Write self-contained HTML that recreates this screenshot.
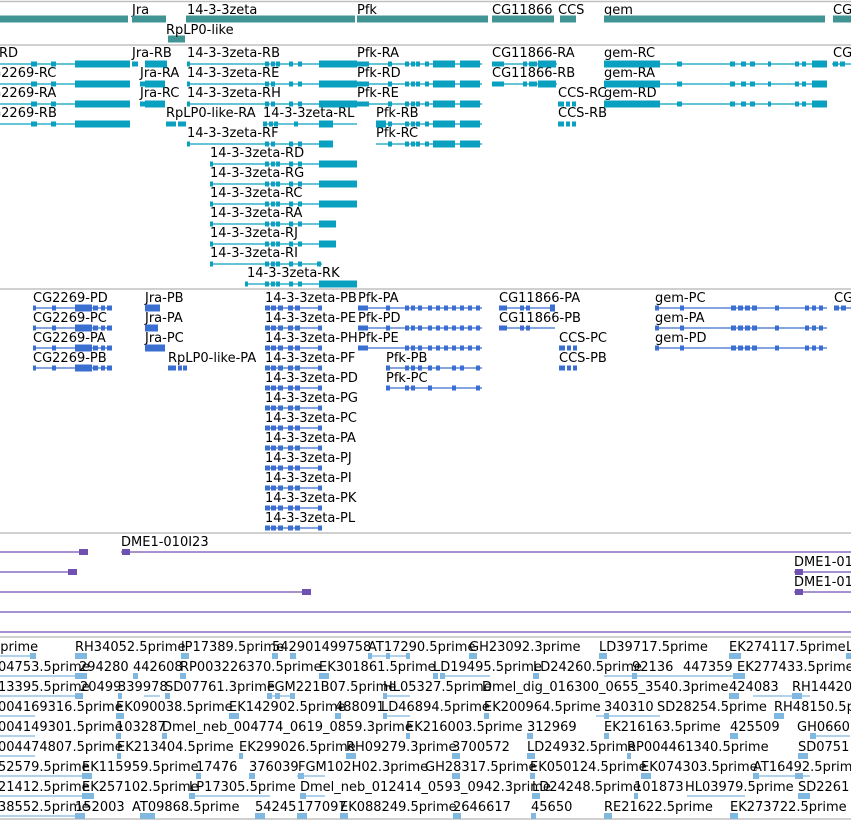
<!DOCTYPE html>
<html><head><meta charset="utf-8"><style>
html,body{margin:0;padding:0;background:#fff;width:851px;height:821px;overflow:hidden}
svg{display:block}
text{font-family:"DejaVu Sans","Liberation Sans",sans-serif;font-size:13px;fill:#000}
.sep{stroke:#c0c0c0;stroke-width:1.5}
.g{stroke:#409494;stroke-width:7;fill:none}
.tl{stroke:#0aa0c0;stroke-width:1.2;fill:none}
.te{stroke:#0aa0c0;stroke-width:5;fill:none}
.tt{stroke:#0aa0c0;stroke-width:7;fill:none}
.pl{stroke:#3a6ed0;stroke-width:1.2;fill:none}
.pe{stroke:#3a6ed0;stroke-width:5;fill:none}
.pt{stroke:#3a6ed0;stroke-width:7;fill:none}
.cl{stroke:#7050b0;stroke-width:1.2;fill:none}
.ce{stroke:#7050b0;stroke-width:6;fill:none}
.el{stroke:#80b8e0;stroke-width:1.2;fill:none}
.ee{stroke:#80b8e0;stroke-width:6;fill:none}
</style></head><body>
<svg width="851" height="821" viewBox="0 0 851 821">
<path class="sep" d="M0 1.5H851M0 45H851M0 289H851M0 533H851M0 637H851M0 819H851"/>

<text x="132" y="14">Jra</text><text x="187" y="14">14-3-3zeta</text><text x="357" y="14">Pfk</text>
<text x="492" y="14">CG11866</text><text x="558" y="14">CCS</text><text x="604" y="14">gem</text><text x="833" y="14">CG</text>
<path class="g" d="M0 19H128M132 19H166M186 19H355M357 19H488M492 19H554M560 19H576M604 19H825M833 19H851M168 39H185"/>
<text x="166" y="34">RpLP0-like</text>

<g>
<text x="-1" y="57">RD</text><text x="132" y="57">Jra-RB</text><text x="187" y="57">14-3-3zeta-RB</text><text x="357" y="57">Pfk-RA</text><text x="492" y="57">CG11866-RA</text><text x="604" y="57">gem-RC</text><text x="833" y="57">CG</text>
<text x="-18" y="77">CG2269-RC</text><text x="140" y="77">Jra-RA</text><text x="187" y="77">14-3-3zeta-RE</text><text x="357" y="77">Pfk-RD</text><text x="492" y="77">CG11866-RB</text><text x="604" y="77">gem-RA</text>
<text x="-18" y="97">CG2269-RA</text><text x="140" y="97">Jra-RC</text><text x="187" y="97">14-3-3zeta-RH</text><text x="357" y="97">Pfk-RE</text><text x="558" y="97">CCS-RC</text><text x="604" y="97">gem-RD</text>
<text x="-18" y="117">CG2269-RB</text><text x="166" y="117">RpLP0-like-RA</text><text x="263" y="117">14-3-3zeta-RL</text><text x="376" y="117">Pfk-RB</text><text x="558" y="117">CCS-RB</text>
<text x="187" y="137">14-3-3zeta-RF</text><text x="376" y="137">Pfk-RC</text>
<text x="210" y="157">14-3-3zeta-RD</text><text x="210" y="177">14-3-3zeta-RG</text><text x="210" y="197">14-3-3zeta-RC</text>
<text x="210" y="217">14-3-3zeta-RA</text><text x="210" y="237">14-3-3zeta-RJ</text><text x="210" y="257">14-3-3zeta-RI</text><text x="247" y="277">14-3-3zeta-RK</text>
</g>
<path class="tl" d="M0 64H130M187 64H357M357 64H482M492 64H557M604 64H827M832 64H851
M0 84H130M187 84H357M357 84H482M492 84H557M604 84H827
M0 104H130M187 104H357M357 104H482M604 104H827
M0 124H130M263 124H357M376 124H482
M187 144H322M376 144H482
M210 164H357M210 184H357M210 204H357M210 224H336M210 244H336M210 264H322M245 284H357"/>
<path class="te" d="M31 64h6M51 64h5M93 64h5M100 64h5M132 64h6M187 64h3M265 64h4M271 64h4M276 64h4M289 64h4M298 64h4M357 64h12M388 64h4M405 64h4M411 64h4M416 64h4M425 64h4M446 64h4M492 64h12M523 64h4M529 64h4M533 64h4M677 64h5M730 64h5M741 64h5M750 64h5M768 64h3M795 64h4M802 64h4M833 64h5M840 64h5
M31 84h6M51 84h5M93 84h5M100 84h5M140 84h5M187 84h3M265 84h4M271 84h4M289 84h4M298 84h4M357 84h12M388 84h4M405 84h4M411 84h4M416 84h4M425 84h4M446 84h4M492 84h12M523 84h4M529 84h4M533 84h4M677 84h5M730 84h5M741 84h5M750 84h5M768 84h3M795 84h4M802 84h4
M31 104h6M51 104h5M93 104h5M100 104h5M140 104h5M187 104h3M265 104h4M271 104h4M289 104h4M298 104h4M357 104h12M388 104h4M405 104h4M411 104h4M416 104h4M425 104h4M446 104h4M558 104h6M566 104h4M572 104h4M677 104h5M730 104h5M741 104h5M750 104h5M768 104h3M795 104h4M802 104h4
M31 124h6M51 124h5M93 124h5M100 124h5M166 124h10M178 124h4M182 124h4M263 124h4M269 124h4M274 124h4M294 124h4M388 124h4M405 124h4M411 124h4M416 124h4M425 124h4M446 124h4M558 124h6M566 124h4M572 124h4
M187 144h3M265 144h4M271 144h4M289 144h4M298 144h4M388 144h4M405 144h4M411 144h4M416 144h4M425 144h4M446 144h4
M210 164h3M265 164h4M271 164h4M276 164h4M289 164h4M298 164h4M210 184h3M265 184h4M271 184h4M276 184h4M289 184h4M298 184h4
M210 204h3M265 204h4M271 204h4M276 204h4M289 204h4M298 204h4M210 224h3M265 224h4M271 224h4M276 224h4M289 224h4M298 224h4
M210 244h3M265 244h4M271 244h4M276 244h4M289 244h4M298 244h4M210 264h3M265 264h4M271 264h4M276 264h4M289 264h4M298 264h4M317 264h4
M245 284h3M265 284h4M271 284h4M276 284h4M289 284h4M298 284h4"/>
<path class="tt" d="M75 64h55M145 64h22M319 64h38M433 64h22M460 64h20M538 64h18M604 64h56M812 64h15
M75 84h55M145 84h20M319 84h38M433 84h22M460 84h20M538 84h18M604 84h56M812 84h15
M75 104h55M145 104h20M319 104h38M433 104h22M460 104h20M604 104h56M812 104h15
M75 124h55M319 124h14M376 124h10M433 124h22M460 124h20
M319 144h14M433 144h22M460 144h20
M319 164h38M319 184h38M319 204h38M319 224h17M319 244h17M319 284h38"/>

<g>
<text x="33" y="302">CG2269-PD</text><text x="145" y="302">Jra-PB</text><text x="265" y="302">14-3-3zeta-PB</text><text x="358" y="302">Pfk-PA</text><text x="499" y="302">CG11866-PA</text><text x="655" y="302">gem-PC</text><text x="834" y="302">CG</text>
<text x="33" y="322">CG2269-PC</text><text x="145" y="322">Jra-PA</text><text x="265" y="322">14-3-3zeta-PE</text><text x="358" y="322">Pfk-PD</text><text x="499" y="322">CG11866-PB</text><text x="655" y="322">gem-PA</text>
<text x="33" y="342">CG2269-PA</text><text x="145" y="342">Jra-PC</text><text x="265" y="342">14-3-3zeta-PH</text><text x="358" y="342">Pfk-PE</text><text x="559" y="342">CCS-PC</text><text x="655" y="342">gem-PD</text>
<text x="33" y="362">CG2269-PB</text><text x="168" y="362">RpLP0-like-PA</text><text x="265" y="362">14-3-3zeta-PF</text><text x="386" y="362">Pfk-PB</text><text x="559" y="362">CCS-PB</text>
<text x="265" y="382">14-3-3zeta-PD</text><text x="386" y="382">Pfk-PC</text>
<text x="265" y="402">14-3-3zeta-PG</text><text x="265" y="422">14-3-3zeta-PC</text><text x="265" y="442">14-3-3zeta-PA</text><text x="265" y="462">14-3-3zeta-PJ</text><text x="265" y="482">14-3-3zeta-PI</text><text x="265" y="502">14-3-3zeta-PK</text><text x="265" y="522">14-3-3zeta-PL</text>
</g>
<path class="pl" d="M33 308H112M265 308H322M358 308H482M499 308H555M655 308H827M834 308H851
M33 328H112M265 328H322M358 328H482M499 328H555M655 328H827
M33 348H112M265 348H322M358 348H482M655 348H827
M33 368H112M265 368H322M386 368H482
M265 388H322M386 388H482
M265 408H322M265 428H322M265 448H322M265 468H322M265 488H322M265 508H322M265 528H322"/>
<path class="pe" d="M33 308h3M52 308h4M93 308h5M101 308h4M107 308h5M265 308h5M271 308h5M278 308h5M288 308h5M295 308h5M318 308h4M358 308h10M386 308h4M405 308h4M411 308h4M418 308h4M428 308h4M436 308h4M444 308h4M452 308h4M460 308h4M468 308h4M476 308h4M499 308h8M520 308h4M526 308h4M655 308h4M680 308h4M731 308h5M738 308h5M745 308h5M752 308h5M775 308h4M805 308h4M812 308h4M819 308h4M834 308h5M841 308h5
M33 328h3M52 328h4M93 328h5M101 328h4M107 328h5M265 328h5M271 328h5M278 328h5M288 328h5M295 328h5M318 328h4M358 328h10M386 328h4M405 328h4M411 328h4M418 328h4M428 328h4M436 328h4M444 328h4M452 328h4M460 328h4M468 328h4M476 328h4M499 328h8M520 328h4M526 328h4M655 328h4M680 328h4M731 328h5M738 328h5M745 328h5M752 328h5M775 328h4M805 328h4M812 328h4M819 328h4
M33 348h3M52 348h4M93 348h5M101 348h4M107 348h5M265 348h5M271 348h5M278 348h5M288 348h5M295 348h5M318 348h4M358 348h10M405 348h4M411 348h4M418 348h4M428 348h4M436 348h4M444 348h4M452 348h4M460 348h4M468 348h4M476 348h4M559 348h6M567 348h4M573 348h4M655 348h4M680 348h4M731 348h5M738 348h5M745 348h5M752 348h5M775 348h4M805 348h4M812 348h4M819 348h4
M33 368h3M52 368h4M93 368h5M101 368h4M107 368h5M168 368h8M178 368h4M183 368h4M265 368h5M271 368h5M278 368h5M288 368h5M295 368h5M318 368h4M386 368h4M405 368h4M411 368h4M418 368h4M428 368h4M436 368h4M452 368h4M460 368h4M476 368h4M559 368h6M567 368h4M573 368h4
M265 388h5M271 388h5M278 388h5M288 388h5M295 388h5M318 388h4M386 388h4M405 388h4M411 388h4M428 388h4M452 388h4M476 388h4
M265 408h5M271 408h5M278 408h5M288 408h5M295 408h5M318 408h4M265 428h5M271 428h5M278 428h5M288 428h5M295 428h5M318 428h4
M265 448h5M271 448h5M278 448h5M288 448h5M295 448h5M318 448h4M265 468h5M271 468h5M278 468h5M288 468h5M295 468h5M318 468h4
M265 488h5M271 488h5M278 488h5M288 488h5M295 488h5M318 488h4M265 508h5M271 508h5M278 508h5M288 508h5M295 508h5M318 508h4
M265 528h5M271 528h5M278 528h5M288 528h5M295 528h5M318 528h4"/>
<path class="pt" d="M75 308h17M145 308h15M550 308h5M75 328h17M145 328h13M75 348h17M145 348h20M75 368h17"/>

<text x="121" y="546">DME1-010I23</text><text x="794" y="566">DME1-01</text><text x="794" y="586">DME1-01</text>
<path class="cl" d="M0 552H85M121 552H851M0 572H75M794 572H851M0 592H308M794 592H851M0 612H851M0 632H851"/>
<path class="ce" d="M79 552h9M122 552h8M68 572h9M302 592h9M795 572h8M795 592h8"/>

<g>
<text x="-8" y="651">5prime</text><text x="75" y="651">RH34052.5prime</text><text x="181" y="651">lP17389.5prime</text><text x="272" y="651">542901499758</text><text x="368" y="651">AT17290.5prime</text><text x="469" y="651">GH23092.3prime</text><text x="599" y="651">LD39717.5prime</text><text x="729" y="651">EK274117.5prime</text><text x="846" y="651">L</text>
<text x="-2" y="671">04753.5prime</text><text x="79" y="671">294280</text><text x="133" y="671">442608</text><text x="180" y="671">RP003226370.5prime</text><text x="319" y="671">EK301861.5prime</text><text x="433" y="671">LD19495.5prime</text><text x="533" y="671">LD24260.5prime</text><text x="632" y="671">92136</text><text x="683" y="671">447359</text><text x="737" y="671">EK277433.5prime</text>
<text x="-2" y="691">13395.5prime</text><text x="80" y="691">20499</text><text x="118" y="691">339978</text><text x="165" y="691">SD07761.3prime</text><text x="267" y="691">FGM221B07.5prime</text><text x="383" y="691">HL05327.5prime</text><text x="482" y="691">Dmel_dig_016300_0655_3540.3prime</text><text x="729" y="691">424083</text><text x="792" y="691">RH14420.</text>
<text x="-2" y="711">004169316.5prime</text><text x="116" y="711">EK090038.5prime</text><text x="229" y="711">EK142902.5prime</text><text x="335" y="711">488091</text><text x="381" y="711">LD46894.5prime</text><text x="484" y="711">EK200964.5prime</text><text x="604" y="711">340310</text><text x="657" y="711">SD28254.5prime</text><text x="774" y="711">RH48150.5p</text>
<text x="-2" y="731">004149301.5prime</text><text x="116" y="731">103287</text><text x="162" y="731">Dmel_neb_004774_0619_0859.3prime</text><text x="406" y="731">EK216003.5prime</text><text x="527" y="731">312969</text><text x="604" y="731">EK216163.5prime</text><text x="730" y="731">425509</text><text x="797" y="731">GH0660</text>
<text x="-2" y="751">004474807.5prime</text><text x="117" y="751">EK213404.5prime</text><text x="239" y="751">EK299026.5prime</text><text x="346" y="751">RH09279.3prime</text><text x="452" y="751">3700572</text><text x="527" y="751">LD24932.5prime</text><text x="627" y="751">RP004461340.5prime</text><text x="798" y="751">SD0751</text>
<text x="-2" y="771">52579.5prime</text><text x="82" y="771">EK115959.5prime</text><text x="196" y="771">17476</text><text x="249" y="771">376039</text><text x="298" y="771">FGM102H02.3prime</text><text x="425" y="771">GH28317.5prime</text><text x="530" y="771">EK050124.5prime</text><text x="641" y="771">EK074303.5prime</text><text x="753" y="771">AT16492.5prime</text>
<text x="-2" y="791">21412.5prime</text><text x="82" y="791">EK257102.5prime</text><text x="189" y="791">LP17305.5prime</text><text x="300" y="791">Dmel_neb_012414_0593_0942.3prime</text><text x="532" y="791">LD24248.5prime</text><text x="634" y="791">101873</text><text x="685" y="791">HL03979.5prime</text><text x="798" y="791">SD2261</text>
<text x="-2" y="811">38552.5prime</text><text x="75" y="811">152003</text><text x="132" y="811">AT09868.5prime</text><text x="255" y="811">54245</text><text x="297" y="811">177097</text><text x="340" y="811">EK088249.5prime</text><text x="453" y="811">2646617</text><text x="531" y="811">45650</text><text x="604" y="811">RE21622.5prime</text><text x="730" y="811">EK273722.5prime</text>
</g>
<path class="el" d="M0 656H35M0 676H82M0 696H82M0 716H35M0 736H35M0 756H35M0 776H82M0 796H82M0 816H82
M368 656H410M604 676H733M144 696H160M272 696H295M383 696H410M383 716H410M601 716H650M190 796H270M300 796H325M596 716H660M759 696H788M754 776H810M687 796H745M753 696H810M813 736H850M297 776H325M440 676H490"/>
<path class="ee" d="M30 656h6M75 656h12M181 656h8M272 656h6M290 656h6M368 656h4M386 656h4M406 656h4M469 656h8M599 656h8M729 656h12M846 656h5
M75 676h12M133 676h5M180 676h6M319 676h10M433 676h5M440 676h5M533 676h6M632 676h5M733 676h12M75 696h8M118 696h4M165 696h5M267 696h5M275 696h5M290 696h5M383 696h4M729 696h10M792 696h10
M116 716h8M229 716h10M335 716h6M383 716h4M484 716h5M604 716h5M774 716h10M116 736h5M162 736h5M406 736h4M527 736h6M604 736h5M730 736h8M810 736h6
M117 756h4M239 756h4M346 756h10M452 756h8M527 756h8M627 756h4M798 756h10M82 776h10M196 776h5M249 776h6M298 776h6M452 776h8M530 776h5M641 776h10M753 776h6M795 776h8
M82 796h12M189 796h6M300 796h6M532 796h8M634 796h4M798 796h12M75 816h10M140 816h15M255 816h10M297 816h10M340 816h8M453 816h8M531 816h5M604 816h8M730 816h8"/>
</svg>
</body></html>
